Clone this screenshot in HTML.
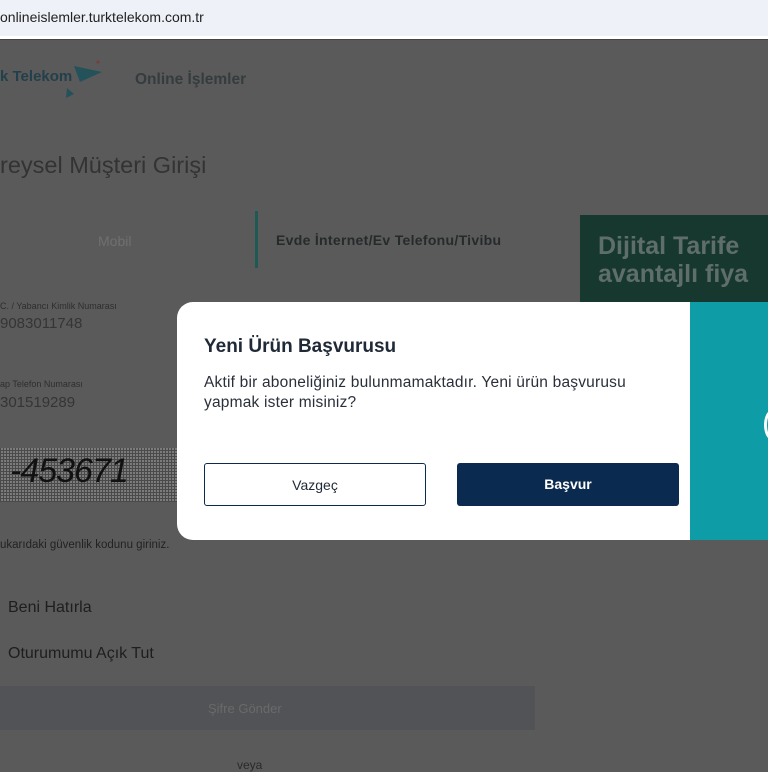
<!DOCTYPE html>
<html><head><meta charset="utf-8"><style>
*{margin:0;padding:0;box-sizing:border-box}
body{width:768px;height:768px;overflow:hidden;background:#5a5a5a;font-family:"Liberation Sans","DejaVu Sans",sans-serif;position:relative}
.bar{position:absolute;left:0;top:0;width:768px;height:36px;background:#eef1f7;font-size:14px;color:#222;line-height:34px}
.bar2{position:absolute;top:36px;left:0;width:768px;height:4px;background:#fff;border-bottom:1px solid #444}
.a{position:absolute;white-space:nowrap}
.modal{position:absolute;left:177px;top:302px;width:513px;height:238px;background:#fff;border-radius:16px 0 0 16px}
.teal{position:absolute;left:690px;top:302px;width:78px;height:238px;background:#0e9ca6}
.btn{position:absolute;top:463px;width:222px;height:43px;border-radius:3px;font-size:14px;text-align:center;line-height:43px}
</style></head><body>
<div class="bar"><span>onlineislemler.turktelekom.com.tr</span></div>
<div class="bar2"></div>
<div class="a" style="left:0;top:68px;font-size:15px;font-weight:bold;color:#23404a">k Telekom</div>
<svg class="a" style="left:62px;top:58px" width="42" height="42"><polygon points="12,8 40,14 18,24" fill="#24525a"/><polygon points="5,30 12,36 4,40" fill="#24525a"/><circle cx="36" cy="4" r="1.5" fill="#7a3b3b"/></svg>
<div class="a" style="left:135px;top:71px;font-size:15.5px;font-weight:bold;color:#363c3e">Online İşlemler</div>
<div class="a" style="left:0;top:152px;font-size:23.5px;color:#333">reysel Müşteri Girişi</div>
<div class="a" style="left:98px;top:233px;font-size:14px;color:#707070">Mobil</div>
<div class="a" style="left:255px;top:211px;width:3px;height:57px;background:#1d5a56"></div>
<div class="a" style="left:276px;top:232px;font-size:14px;font-weight:bold;color:#262a2b;letter-spacing:0.3px">Evde İnternet/Ev Telefonu/Tivibu</div>
<div class="a" style="left:580px;top:215px;width:188px;height:90px;background:#17382f"></div>
<div class="a" style="left:598px;top:232px;font-size:25px;font-weight:bold;color:#5f6e6a;line-height:28px">Dijital Tarife<br>avantajlı fiya</div>
<div class="a" style="left:0;top:301px;font-size:9px;color:#2e2e2e">C. / Yabancı Kimlik Numarası</div>
<div class="a" style="left:0;top:315px;font-size:15px;color:#353535">9083011748</div>
<div class="a" style="left:0;top:379px;font-size:9px;color:#2e2e2e">ap Telefon Numarası</div>
<div class="a" style="left:0;top:394px;font-size:15px;color:#353535">301519289</div>
<div class="a" style="left:0;top:448px;width:177px;height:54px;background:repeating-linear-gradient(0deg,#4a4a4a 0 1px,transparent 1px 3px),repeating-linear-gradient(90deg,#4a4a4a 0 1px,transparent 1px 3px),#7c7c7c"></div>
<div class="a" style="left:10px;top:452px;font-size:34px;font-style:italic;color:#111;letter-spacing:-1px">-453671</div>
<div class="a" style="left:0;top:539px;font-size:11.5px;color:#222">ukarıdaki güvenlik kodunu giriniz.</div>
<div class="a" style="left:8px;top:599px;font-size:16px;color:#1e1e1e">Beni Hatırla</div>
<div class="a" style="left:8px;top:645px;font-size:16px;color:#1e1e1e">Oturumumu Açık Tut</div>
<div class="a" style="left:0;top:686px;width:535px;height:44px;background:#515356"></div>
<div class="a" style="left:208px;top:701px;font-size:13px;color:#6a6a6a">Şifre Gönder</div>
<div class="a" style="left:237px;top:758px;font-size:12px;color:#2a2a2a">veya</div>
<div class="modal"></div>
<div class="teal"></div>
<div class="a" style="left:764px;top:410px;width:16px;height:30px;border:3px solid #fff;border-radius:50%"></div>
<div class="a" style="left:204px;top:336px;font-size:19px;font-weight:bold;color:#1f2937">Yeni Ürün Başvurusu</div>
<div class="a" style="left:204px;top:373px;font-size:15.5px;color:#2a2f3a;line-height:20px;letter-spacing:0.2px">Aktif bir aboneliğiniz bulunmamaktadır. Yeni ürün başvurusu<br>yapmak ister misiniz?</div>
<div class="btn" style="left:204px;border:1px solid #0b2a4e;background:#fff;color:#1f2937">Vazgeç</div>
<div class="btn" style="left:457px;background:#0b2a4f;color:#fff;font-weight:bold">Başvur</div>
</body></html>
